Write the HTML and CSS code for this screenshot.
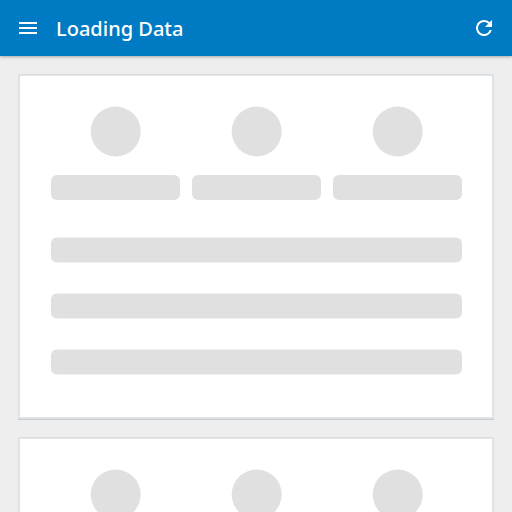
FILE: index.html
```html
<!DOCTYPE html>
<html lang="en">
<head>
<meta charset="utf-8">
<title>Loading Data</title>
<link rel="stylesheet" href="styles.css">
</head>
<body>
<header class="toolbar">
  <svg class="icon" viewBox="0 0 24 24"><path d="M3 18h18v-2H3v2zm0-5h18v-2H3v2zm0-7v2h18V6H3z"/></svg>
  <h1 class="title">Loading Data</h1>
  <svg class="icon" viewBox="0 0 24 24"><path d="M17.65 6.35A7.958 7.958 0 0 0 12 4a8 8 0 1 0 7.73 10h-2.08A5.99 5.99 0 0 1 12 18a6 6 0 1 1 0-12c1.66 0 3.14.69 4.22 1.78L13 11h7V4l-2.35 2.35z"/></svg>
</header>
<main class="content">
  <section class="card">
    <div class="columns">
      <div class="column"><div class="circle"></div><div class="bar"></div></div>
      <div class="column"><div class="circle"></div><div class="bar"></div></div>
      <div class="column"><div class="circle"></div><div class="bar"></div></div>
    </div>
    <div class="rows"><div class="bar"></div><div class="bar"></div><div class="bar"></div></div>
  </section>
  <section class="card">
    <div class="columns">
      <div class="column"><div class="circle"></div><div class="bar"></div></div>
      <div class="column"><div class="circle"></div><div class="bar"></div></div>
      <div class="column"><div class="circle"></div><div class="bar"></div></div>
    </div>
    <div class="rows"><div class="bar"></div><div class="bar"></div><div class="bar"></div></div>
  </section>
</main>
</body>
</html>
```
FILE: styles.css
```css
* { box-sizing: border-box; }
body { margin: 0; height: 100vh; overflow: hidden; display: flex; flex-direction: column; background: #eee; font-family: "Noto Sans", sans-serif; }
.toolbar { flex: none; height: 56px; padding: 0 16px; display: flex; align-items: center; background: #007bc3; color: #fff; box-shadow: 0 1px 3px rgba(0,0,0,.3); }
.icon { width: 24px; height: 24px; fill: currentColor; }
.title { flex: 1; margin: 2px 0 0 16px; font-size: 20px; font-weight: 500; line-height: 28px; }
.content { flex: 1; min-height: 0; padding: 19px; display: flex; flex-direction: column; gap: 20px; overflow: hidden; }
.card { flex: none; height: 343px; padding: 30px 31px 0; background: #fff; border: 1px solid #e0e6ea; box-shadow: 0 0 0 1px #dcdfe1, 0 1px 0 1px #c9ced2; }
.columns { display: grid; grid-template-columns: repeat(3, 129px); gap: 12px; }
.column { display: flex; flex-direction: column; align-items: center; gap: 19px; }
.circle { width: 50px; height: 50px; border-radius: 50%; background: #e0e0e0; transform: translate(-.3px, .5px); }
.bar { width: 100%; height: 25px; border-radius: 6px; background: #e0e0e0; }
.rows { margin-top: 37px; width: 410.5px; display: flex; flex-direction: column; gap: 31px; transform: translateY(.4px); }
```
